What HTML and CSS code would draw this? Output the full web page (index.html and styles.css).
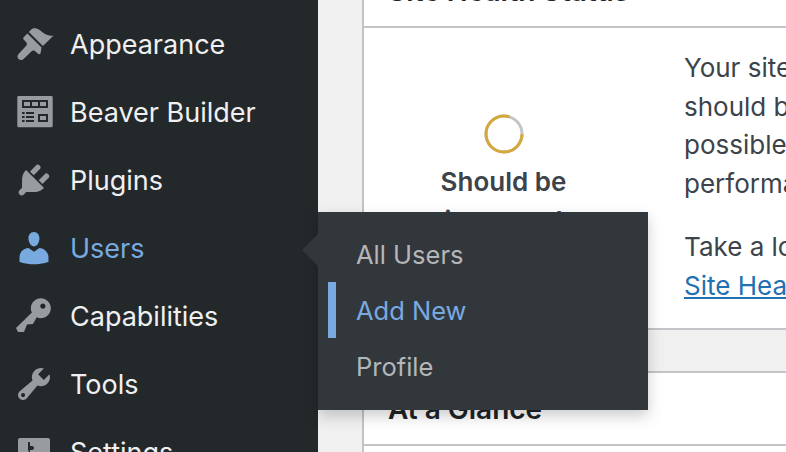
FILE: index.html
```html
<!DOCTYPE html>
<html lang="en">
<head>
    <meta charset="UTF-8" />
    <title>Dashboard</title>
    <link rel="stylesheet" href="styles.css">
</head>
<body>
    <div class="sidebar">
        <ul class="menu">
            <li class="menu-item">
                <svg class="menu-icon" viewBox="0 0 20 20"><path d="M14.48 11.06L7.41 3.99l1.5-1.5c.5-.56 2.3-.47 3.51.32 1.21.8 1.43 1.28 2.91 2.1 1.18.64 2.45 1.26 4.45.85zM13.77 11.77L6.7 4.7 4.93 6.47c-.39.39-.39 1.02 0 1.41l1.06 1.06c.59.59.59 1.53 0 2.12l-3.71 3.9c-.7.7-.7 1.8 0 2.5.7.7 1.8.7 2.5 0l3.9-3.71c.59-.59 1.53-.59 2.12 0l1.06 1.06c.39.39 1.02.39 1.41 0z"/></svg>
                <span>Appearance</span>
            </li>
            <li class="menu-item">
                <svg class="menu-icon" viewBox="0 0 20 20"><path fill-rule="evenodd" d="M2.3 2h16.4c.4 0 .65.3.65.7v14.2c0 .4-.25.7-.65.7H2.3c-.4 0-.65-.3-.65-.7V2.7c0-.4.25-.7.65-.7zM4 4v4h13V4zM5 5h3v2H5zM9 5h3v2H9zM13 5h3v2h-3zM4 10h1.3v1H4zM6 10h4v1H6zM4 12h1.3v1H4zM6 12h4v1H6zM4 14h1.3v1H4zM6 14h4v1H6zM12 11h5v4h-5zM13 12v2h3v-2z"/></svg>
                <span>Beaver Builder</span>
            </li>
            <li class="menu-item">
                <svg class="menu-icon" viewBox="0 0 20 20"><path d="M13.11 4.36L9.87 7.6 8 5.73l3.24-3.24c.35-.34 1.05-.2 1.56.32.52.51.66 1.21.31 1.55zm-8 1.77l.91-1.12 9.01 9.01-1.19.84c-.71.71-2.63 1.16-3.82 1.16H6.14L4.9 17.26c-.59.59-1.54.59-2.12 0-.59-.58-.59-1.53 0-2.12l1.24-1.24v-3.88c0-1.13.4-3.19 1.09-3.89zm7.26 3.97l3.24-3.24c.34-.35 1.04-.2 1.55.31.52.51.66 1.21.31 1.55l-3.24 3.25z"/></svg>
                <span>Plugins</span>
            </li>
            <li class="menu-item active">
                <svg class="menu-icon" viewBox="0 0 20 20"><path d="M10 9.25c-2.27 0-2.73-3.44-2.73-3.44C7 4.02 7.82 2 9.97 2c2.16 0 2.98 2.02 2.71 3.81 0 0-.41 3.44-2.68 3.44zm0 2.57L12.72 10c2.39 0 4.52 2.33 4.52 4.53v2.49s-3.65 1.13-7.24 1.13c-3.65 0-7.24-1.13-7.24-1.13v-2.49c0-2.25 1.94-4.48 4.47-4.48z"/></svg>
                <span>Users</span>
            </li>
            <li class="menu-item">
                <svg class="menu-icon" viewBox="0 0 20 20"><path d="M16.95 2.58c1.96 1.95 1.96 5.12 0 7.07-1.51 1.51-3.75 1.84-5.59 1.01l-1.87 3.31-2.99.31L5 18H2l-1-2 7.95-7.69c-.92-1.87-.62-4.18.93-5.73 1.95-1.96 5.12-1.96 7.07 0zm-2.51 3.79c.74 0 1.33-.6 1.33-1.34 0-.73-.59-1.33-1.33-1.33-.73 0-1.33.6-1.33 1.33 0 .74.6 1.34 1.33 1.34z"/></svg>
                <span>Capabilities</span>
            </li>
            <li class="menu-item">
                <svg class="menu-icon" viewBox="0 0 20 20"><path d="M16.68 9.77c-1.34 1.34-3.3 1.67-4.95.99l-5.41 6.52c-.99.99-2.59.99-3.58 0s-.99-2.59 0-3.57l6.52-5.42c-.68-1.65-.35-3.61.99-4.95 1.28-1.28 3.12-1.62 4.72-1.06l-2.89 2.89 2.82 2.82 2.86-2.87c.53 1.58.18 3.39-1.08 4.65zM3.81 16.21c.4.39 1.04.39 1.43 0 .4-.4.4-1.04 0-1.43-.39-.4-1.03-.4-1.43 0-.39.39-.39 1.03 0 1.43z"/></svg>
                <span>Tools</span>
            </li>
            <li class="menu-item">
                <svg class="menu-icon" viewBox="0 0 20 20"><path d="M18 16V4c0-.55-.45-1-1-1H3c-.55 0-1 .45-1 1v12c0 .55.45 1 1 1h14c.55 0 1-.45 1-1zM8 11h1c.55 0 1 .45 1 1s-.45 1-1 1H8v1.5c0 .28-.22.5-.5.5s-.5-.22-.5-.5V13H6c-.55 0-1-.45-1-1s.45-1 1-1h1V5.5c0-.28.22-.5.5-.5s.5.22.5.5V7h1c.55 0 1 .45 1 1s-.45 1-1 1h-1v5.5c0 .28-.22.5-.5.5s-.5-.22-.5-.5V9z"/></svg>
                <span>Settings</span>
            </li>
        </ul>
    </div>

    <div class="flyout">
        <a class="flyout-link">All Users</a>
        <a class="flyout-link current">Add New</a>
        <a class="flyout-link">Profile</a>
    </div>

    <div class="content">
        <div class="card">
            <h2 class="card-title">Site Health Status</h2>
            <div class="health">
                <div class="health-status">
                    <svg class="health-ring" viewBox="0 0 40 40">
                        <circle class="ring-track" cx="20" cy="20" r="18" />
                        <circle class="ring-bar" cx="20" cy="20" r="18" pathLength="100" stroke-dasharray="80 20" />
                    </svg>
                    <div class="health-label">Should be<br>improved</div>
                </div>
                <div class="health-text">
                    <p>Your site’s health is looking good, but there are still some things you<br>should be doing to improve its security and<br>possible and<br>performance.</p>
                    <p>Take a look at the 3 items on the<br><a class="link">Site Health screen</a>.</p>
                </div>
            </div>
        </div>
        <div class="card">
            <h2 class="card-title">At a Glance</h2>
            <div class="glance"></div>
        </div>
    </div>
</body>
</html>
```

FILE: styles.css
```css
body {
    font-family: Inter, "Liberation Sans", sans-serif;
    margin: 0;
    padding: 0;
    display: flex;
    height: 452px;
    overflow: hidden;
    background: #f0f0f1;
    position: relative;
}

.sidebar {
    width: 318px;
    flex-shrink: 0;
    background: #23282b;
    padding-top: 10px;
}

.menu {
    list-style: none;
    margin: 0;
    padding: 0;
}

.menu-item {
    display: flex;
    align-items: center;
    gap: 16px;
    height: 68px;
    padding-left: 14px;
    font-size: 27px;
    color: #f0f0f1;
}

.menu-icon {
    width: 40px;
    height: 40px;
    fill: #989c9f;
    flex-shrink: 0;
}

.menu-item.active {
    color: #78aae0;
}

    .menu-item.active .menu-icon {
        fill: #78aae0;
    }

.flyout {
    position: absolute;
    left: 318px;
    top: 212px;
    width: 330px;
    height: 198px;
    box-sizing: border-box;
    padding-top: 14px;
    background: #32373c;
    box-shadow: 0 6px 14px rgba(0, 0, 0, 0.2);
    font-size: 25.5px;
}

    .flyout::before {
        content: "";
        position: absolute;
        left: -16px;
        top: 22px;
        border-style: solid;
        border-width: 16px 16px 16px 0;
        border-color: transparent #32373c transparent transparent;
    }

.flyout-link {
    display: flex;
    align-items: center;
    height: 56px;
    margin-left: 10px;
    padding-left: 28px;
    color: #b4b6b9;
}

    .flyout-link.current {
        color: #78aae0;
        border-left: 8px solid #78aae0;
        padding-left: 20px;
    }

.content {
    flex: 1;
    min-width: 0;
    margin-top: -47px;
    padding-left: 44px;
}

.card {
    background: #fff;
    border: solid #c3c4c7;
    border-width: 2px 0 2px 2px;
    margin-bottom: 41px;
}

.card-title {
    margin: 0;
    height: 73px;
    box-sizing: border-box;
    padding: 18px 0 0 24px;
    border-bottom: 2px solid #c3c4c7;
    font-size: 28px;
    line-height: 36px;
    font-weight: 600;
    color: #1d2327;
    white-space: nowrap;
}

.health {
    display: flex;
    height: 300px;
    box-sizing: border-box;
    padding-top: 21px;
    overflow: hidden;
}

.health-status {
    width: 279px;
    flex-shrink: 0;
    padding-top: 65px;
    text-align: center;
}

.health-ring {
    display: block;
    width: 40px;
    height: 40px;
    margin: 0 auto 8px;
}

.ring-track,
.ring-bar {
    fill: none;
    stroke-width: 3;
}

.ring-track {
    stroke: #c3c4c7;
}

.ring-bar {
    stroke: #d5a83c;
}

.health-label {
    font-size: 26px;
    line-height: 39px;
    font-weight: 600;
    color: #3c434a;
}

.health-text {
    margin-left: 41px;
    font-size: 26px;
    line-height: 38.6px;
    color: #3c434a;
    white-space: nowrap;
}

    .health-text p {
        margin: 0 0 25px;
    }

.link {
    color: #2271b1;
    text-decoration: underline;
}

.glance {
    height: 120px;
}
```
